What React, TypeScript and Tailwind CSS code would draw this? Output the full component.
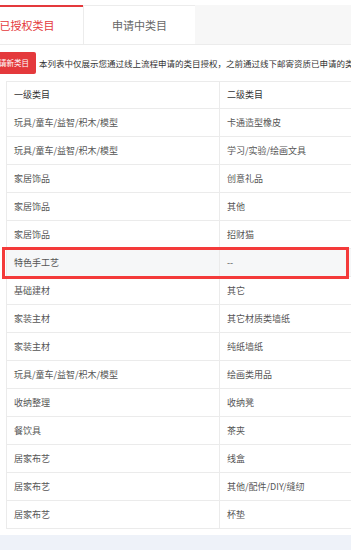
import React from 'react';

const rows: [string, string][] = [
  ['玩具/童车/益智/积木/模型', '卡通造型橡皮'],
  ['玩具/童车/益智/积木/模型', '学习/实验/绘画文具'],
  ['家居饰品', '创意礼品'],
  ['家居饰品', '其他'],
  ['家居饰品', '招财猫'],
  ['特色手工艺', '--'],
  ['基础建材', '其它'],
  ['家装主材', '其它材质类墙纸'],
  ['家装主材', '纯纸墙纸'],
  ['玩具/童车/益智/积木/模型', '绘画类用品'],
  ['收纳整理', '收纳凳'],
  ['餐饮具', '茶夹'],
  ['居家布艺', '线盒'],
  ['居家布艺', '其他/配件/DIY/缝纫'],
  ['居家布艺', '杯垫'],
];

const App: React.FC = () => {
  return (
    <div
      className="relative w-[351px] h-[550px] overflow-hidden bg-[#eef2f9]"
      style={{ fontFamily: '"Noto Sans CJK SC", "Noto Sans", sans-serif' }}
    >
      <div className="bg-white pt-[5px] pb-[6px]">
        {/* tabs */}
        <div className="flex h-[40px] bg-[#f7f7f7] border-b border-[#ececec] -ml-[29px] w-[400px]">
          <div className="w-[112px] shrink-0 bg-white border-t-2 border-[#e4393c] flex items-center justify-center text-[11px] text-[#e4393c]">
            已授权类目
          </div>
          <div className="w-[112px] shrink-0 bg-white border-l border-t border-[#ececec] flex items-center justify-center text-[11px] text-[#666]">
            申请中类目
          </div>
        </div>

        {/* action row */}
        <div className="flex items-center mt-[7px] h-[22px] whitespace-nowrap overflow-hidden">
          <button className="-ml-[15.5px] h-[22px] px-[7px] bg-[#e4393c] text-white text-[7.5px] rounded-[2px] shrink-0">
            申请新类目
          </button>
          <span className="ml-[3px] text-[8.5px] text-[#333]">
            本列表中仅展示您通过线上流程申请的类目授权，之前通过线下邮寄资质已申请的类目
          </span>
        </div>

        {/* table */}
        <div className="mt-[7px] ml-[6px] w-[420px] border-l border-t border-[#ebebeb] text-[9px]">
          <div className="flex h-[27px] border-b border-[#ebebeb] text-[#333]">
            <div className="w-[213px] shrink-0 pl-[7px] flex items-center border-r border-[#ebebeb]">一级类目</div>
            <div className="flex-1 pl-[7px] flex items-center">二级类目</div>
          </div>
          {rows.map(([a, b], i) => (
            <div
              key={i}
              className={`flex h-[28px] border-b border-[#ebebeb] text-[#555] ${i === 5 ? 'bg-[#f6f7f8]' : 'bg-white'}`}
            >
              <div className="w-[213px] shrink-0 pl-[7px] flex items-center border-r border-[#ebebeb]">{a}</div>
              <div className="flex-1 pl-[7px] flex items-center">{b}</div>
            </div>
          ))}
        </div>
      </div>

      {/* annotation box */}
      <div className="absolute left-[2px] top-[247px] w-[347px] h-[32px] border-[3px] border-[#f43a3a] pointer-events-none" />
    </div>
  );
};

export default App;
